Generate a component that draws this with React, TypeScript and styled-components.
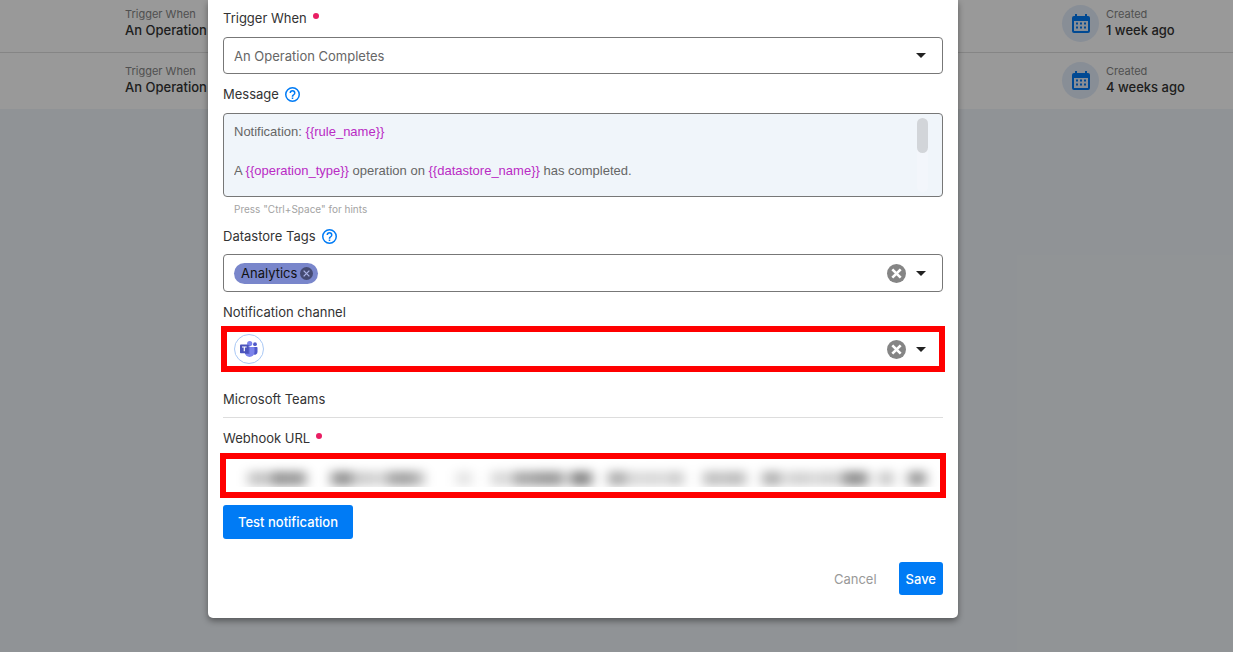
import React from "react";
import styled, { createGlobalStyle } from "styled-components";

const GlobalStyle = createGlobalStyle`
  *, *::before, *::after { box-sizing: border-box; }
  body {
    margin: 0;
    background: #f1f6fa;
    color: #333;
    font-family: Inter, "Open Sans", sans-serif;
    font-size: 13px;
  }
  button, input, select { font: inherit; color: inherit; }
`;

const Page = styled.div`
  position: relative;
  min-height: 100vh;
  overflow: hidden;
`;

const RuleList = styled.ul`
  margin: 0;
  padding: 0;
  list-style: none;
  background: #fff;
`;

const RuleRow = styled.li`
  display: flex;
  justify-content: space-between;
  align-items: flex-start;
  padding: 9px 0 10px 125px;

  &:first-child {
    padding-top: 5px;
    border-bottom: 1px solid #dedede;
  }
`;

const CreatedCell = styled.div`
  display: flex;
  align-items: flex-start;
  gap: 7px;
  width: 171px;
`;

const IconDisc = styled.span`
  display: grid;
  place-items: center;
  width: 37px;
  height: 37px;
  border-radius: 50%;
  background: #e3edfb;
`;

const Stat = styled.div`
  padding-top: 1px;
`;

const Caption = styled.div`
  font-size: 11px;
  line-height: 16px;
  color: #868686;
`;

const Value = styled.div`
  line-height: 16px;
  font-weight: 500;
  white-space: nowrap;
`;

const Overlay = styled.div`
  position: absolute;
  inset: 0;
  padding: 0 275px 34px 208px;
  background: rgba(0, 0, 0, 0.4);
`;

const Dialog = styled.form`
  display: flex;
  flex-direction: column;
  padding: 8px 15px 23px;
  background: #fff;
  border-radius: 0 0 5px 5px;
  box-shadow: 0 3px 6px rgba(0, 0, 0, 0.4);
`;

const Field = styled.div<{ $gap?: number; $top?: number }>`
  display: flex;
  flex-direction: column;
  gap: ${(p) => p.$gap ?? 9}px;
  margin-top: ${(p) => p.$top ?? 10}px;
`;

const LabelRow = styled.div`
  display: flex;
  align-items: center;
  gap: 6px;
  line-height: 20px;
`;

const Required = styled.span`
  width: 6px;
  height: 6px;
  margin-bottom: 4px;
  border-radius: 50%;
  background: #e91e63;
`;

const IconButton = styled.button`
  display: grid;
  place-items: center;
  padding: 0;
  border: 0;
  background: none;
  cursor: pointer;
`;

const Control = styled.div<{ $height: number }>`
  display: flex;
  align-items: center;
  height: ${(p) => p.$height}px;
  padding: 0 16px 0 10px;
  border: 1px solid #777;
  border-radius: 4px;
  background: #fff;
`;

const HighlightControl = styled(Control)<{ $bleed: number }>`
  margin: 0 -${(p) => p.$bleed}px;
  padding: 0 ${(p) => 11 + p.$bleed}px 0 7px;
  border: 6px solid #f00;
  border-radius: 0;
`;

const Select = styled.select`
  flex: 1;
  min-width: 0;
  height: 34px;
  padding: 0;
  border: 0;
  outline: 0;
  appearance: none;
  background: none;
  color: #666;
`;

const TextInput = styled.input`
  flex: 1;
  min-width: 0;
  align-self: stretch;
  padding: 0;
  border: 0;
  outline: 0;
  background: none;
`;

const Actions = styled.div`
  display: flex;
  align-items: center;
  gap: 10px;
`;

const Editor = styled.div`
  display: flex;
  justify-content: space-between;
  height: 84px;
  padding: 4px 14px 4px 10px;
  border: 1px solid #777;
  border-radius: 4px;
  background: #f0f5fa;
`;

const EditorText = styled.div`
  flex: 1;
  padding-top: 4px;
  outline: 0;
  overflow: hidden;
  font-family: "Liberation Sans", Arial, sans-serif;
  line-height: 20px;
  color: #666;

  p { margin: 0 0 19px; }
`;

const Token = styled.span`
  color: #b92bc4;
`;

const ScrollTrack = styled.div`
  width: 11px;
  border-radius: 6px;
  background: #f3f6fb;
`;

const ScrollThumb = styled.div`
  height: 35px;
  border-radius: 6px;
  background: #d2d5d9;
`;

const Hint = styled.div`
  margin-top: 6px;
  padding-left: 11px;
  font-size: 10px;
  line-height: 13px;
  color: #a3a3a3;
`;

const Tag = styled.span`
  display: flex;
  align-items: center;
  gap: 3px;
  height: 21px;
  padding: 0 5px 0 7px;
  border-radius: 11px;
  background: #7986cb;
  color: #111;
`;

const ChannelBadge = styled.span`
  display: grid;
  place-items: center;
  width: 30px;
  height: 30px;
  border: 1px solid #a9c8f5;
  border-radius: 50%;
`;

const Section = styled.h2`
  margin: 17px 0 0;
  padding-bottom: 8px;
  border-bottom: 1px solid #ddd;
  font-size: 13px;
  font-weight: 400;
  line-height: 20px;
`;

const MaskedControl = styled(HighlightControl)`
  position: relative;
  padding: 0;

  svg {
    position: absolute;
    inset: 0;
    width: 100%;
    height: 28px;
    pointer-events: none;
  }
`;

const Button = styled.button<{ $plain?: boolean }>`
  height: 33px;
  padding: 0 ${(p) => (p.$plain ? 0 : 7)}px;
  border: 0;
  border-radius: 3px;
  background: ${(p) => (p.$plain ? "none" : "#007bf5")};
  color: ${(p) => (p.$plain ? "#999" : "#fff")};
  font-weight: ${(p) => (p.$plain ? 400 : 500)};
  cursor: pointer;
`;

const TestButton = styled(Button)`
  align-self: flex-start;
  height: 34px;
  margin-top: 7px;
  padding: 0 15px;
`;

const Footer = styled.div`
  display: flex;
  justify-content: flex-end;
  gap: 22px;
  margin-top: 23px;
`;

const CalendarIcon = () => (
  <svg width="18" height="20" viewBox="0 0 18 20" aria-hidden="true">
    <path
      fill="#007bf5"
      fillRule="evenodd"
      d="M3 0h2v2h8V0h2v2h1a2 2 0 0 1 2 2v13a2 2 0 0 1-2 2H2a2 2 0 0 1-2-2V4a2 2 0 0 1 2-2h1zM2 7v10h14V7z"
    />
    <path
      fill="#007bf5"
      d="M4 8.500h2v2H4zM8 8.500h2v2H8zM12 8.500h2v2h-2zM4 12.500h2v2H4zM8 12.500h2v2H8zM12 12.500h2v2h-2z"
    />
  </svg>
);

const HelpIcon = () => (
  <svg width="15" height="15" viewBox="2 2 20 20" aria-hidden="true">
    <path
      fill="#007bf5"
      d="M11 18h2v-2h-2v2zm1-16a10 10 0 1 0 0 20 10 10 0 0 0 0-20zm0 18a8 8 0 1 1 0-16 8 8 0 0 1 0 16zm0-14a4 4 0 0 0-4 4h2a2 2 0 1 1 4 0c0 2-3 1.750-3 5h2c0-2.250 3-2.500 3-5a4 4 0 0 0-4-4z"
    />
  </svg>
);

const CaretIcon = () => (
  <svg width="10" height="5" viewBox="0 0 10 5" aria-hidden="true">
    <path fill="#222" d="M0 0h10L5 5z" />
  </svg>
);

const CloseIcon = ({ size, disc, cross, stroke }: { size: number; disc: string; cross: string; stroke: number }) => (
  <svg width={size} height={size} viewBox="0 0 20 20" aria-hidden="true">
    <circle cx="10" cy="10" r="10" fill={disc} />
    <path d="M5.600 5.600l8.800 8.800M14.400 5.600l-8.800 8.800" stroke={cross} strokeWidth={stroke} />
  </svg>
);

const TeamsIcon = () => (
  <svg width="18" height="16" viewBox="0 0 18 16" aria-hidden="true">
    <circle cx="15" cy="3.200" r="1.900" fill="#5059c9" />
    <path fill="#5059c9" d="M13 6h3.800a.7.7 0 0 1 .7.700V11a2.700 2.700 0 0 1-4.500 2z" />
    <circle cx="9.700" cy="2.600" r="2.600" fill="#7b83eb" />
    <path fill="#7b83eb" d="M5.500 6h8.200a.8.8 0 0 1 .8.800V11a4.900 4.900 0 0 1-9.800 0V6.800z" />
    <path fill="#4550b8" opacity=".6" d="M5 4h4.500v9H5z" />
    <rect y="3.500" width="8.500" height="8.800" rx=".8" fill="#4b53bc" />
    <path fill="#fff" d="M2 5.500h4.600v1.100H4.900V10.300H3.700V6.600H2z" />
  </svg>
);

/* Smudges that hide the webhook address: [x, width, opacity] */
const smudges: [number, number, number][] = [
  [22, 30, 0.22], [48, 32, 0.38], [105, 20, 0.4], [122, 22, 0.19], [144, 14, 0.16],
  [160, 24, 0.34], [182, 16, 0.27], [230, 16, 0.1], [265, 18, 0.15], [286, 24, 0.33],
  [310, 28, 0.38], [344, 22, 0.46], [382, 18, 0.31], [400, 24, 0.14], [424, 14, 0.15],
  [440, 18, 0.19], [477, 20, 0.24], [498, 22, 0.25], [536, 20, 0.29], [560, 28, 0.17],
  [590, 24, 0.17], [616, 26, 0.42], [652, 16, 0.2], [682, 18, 0.38],
];

const MaskedAddress = () => (
  <svg viewBox="0 0 714 28" preserveAspectRatio="none" aria-hidden="true">
    <defs>
      <filter id="smudge" x="-5%" y="-100%" width="110%" height="300%">
        <feGaussianBlur stdDeviation="6 5" />
      </filter>
    </defs>
    <g filter="url(#smudge)">
      {smudges.map(([x, width, opacity]) => (
        <rect key={x} x={x} y="12" width={width} height="15" opacity={opacity} fill="#000" />
      ))}
    </g>
  </svg>
);

const Rule = ({ created }: { created: string }) => (
  <RuleRow>
    <Stat>
      <Caption>Trigger When</Caption>
      <Value>An Operation</Value>
    </Stat>
    <CreatedCell>
      <IconDisc><CalendarIcon /></IconDisc>
      <Stat>
        <Caption>Created</Caption>
        <Value>{created}</Value>
      </Stat>
    </CreatedCell>
  </RuleRow>
);

const SelectActions = ({ name }: { name: string }) => (
  <Actions>
    <IconButton type="button" aria-label={`Clear ${name}`}>
      <CloseIcon size={19} disc="#858585" cross="#fff" stroke={2.8} />
    </IconButton>
    <IconButton type="button" aria-label={`Open ${name}`}>
      <CaretIcon />
    </IconButton>
  </Actions>
);

export default function App() {
  return (
    <Page>
      <GlobalStyle />
      <RuleList>
        <Rule created="1 week ago" />
        <Rule created="4 weeks ago" />
      </RuleList>
      <Overlay>
        <Dialog role="dialog" aria-label="Notification rule" onSubmit={(e) => e.preventDefault()}>
          <Field $top={0}>
            <LabelRow>
              <label htmlFor="trigger">Trigger When</label>
              <Required />
            </LabelRow>
            <Control $height={37}>
              <Select id="trigger">
                <option>An Operation Completes</option>
              </Select>
              <CaretIcon />
            </Control>
          </Field>

          <Field>
            <LabelRow>
              <span id="message-label">Message</span>
              <IconButton type="button" aria-label="About the message"><HelpIcon /></IconButton>
            </LabelRow>
            <Editor>
              <EditorText
                role="textbox"
                aria-multiline="true"
                aria-labelledby="message-label"
                contentEditable
                suppressContentEditableWarning
              >
                <p>Notification: <Token>{"{{rule_name}}"}</Token></p>
                <p>
                  A <Token>{"{{operation_type}}"}</Token> operation on{" "}
                  <Token>{"{{datastore_name}}"}</Token> has completed.
                </p>
              </EditorText>
              <ScrollTrack><ScrollThumb /></ScrollTrack>
            </Editor>
          </Field>
          <Hint>Press "Ctrl+Space" for hints</Hint>

          <Field $gap={8}>
            <LabelRow>
              <label htmlFor="tags">Datastore Tags</label>
              <IconButton type="button" aria-label="About datastore tags"><HelpIcon /></IconButton>
            </LabelRow>
            <Control $height={38}>
              <Tag>
                Analytics
                <IconButton type="button" aria-label="Remove Analytics">
                  <CloseIcon size={13} disc="#454b73" cross="#aab3e6" stroke={2} />
                </IconButton>
              </Tag>
              <TextInput id="tags" />
              <SelectActions name="datastore tags" />
            </Control>
          </Field>

          <Field $gap={4}>
            <LabelRow><label htmlFor="channel">Notification channel</label></LabelRow>
            <HighlightControl $height={46} $bleed={2}>
              <ChannelBadge><TeamsIcon /></ChannelBadge>
              <TextInput id="channel" />
              <SelectActions name="notification channel" />
            </HighlightControl>
          </Field>

          <Section>Microsoft Teams</Section>

          <Field $gap={5}>
            <LabelRow>
              <label htmlFor="webhook">Webhook URL</label>
              <Required />
            </LabelRow>
            <MaskedControl $height={45} $bleed={3}>
              <TextInput id="webhook" />
              <MaskedAddress />
            </MaskedControl>
          </Field>
          <TestButton type="button">Test notification</TestButton>

          <Footer>
            <Button type="button" $plain>Cancel</Button>
            <Button type="submit">Save</Button>
          </Footer>
        </Dialog>
      </Overlay>
    </Page>
  );
}
